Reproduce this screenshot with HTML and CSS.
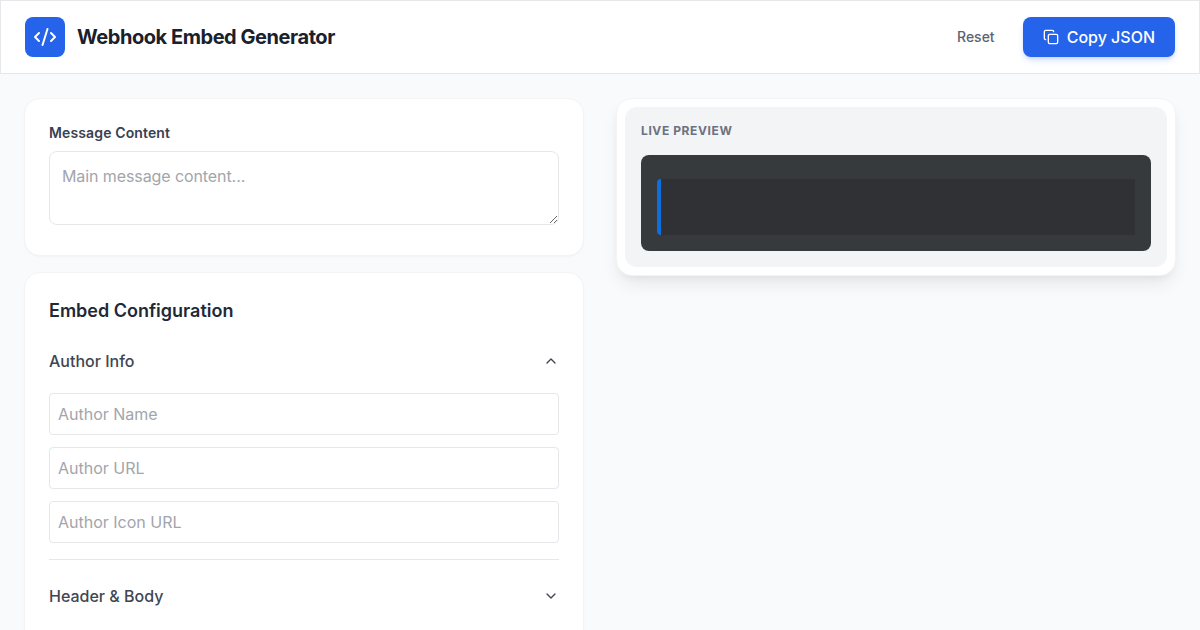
FILE: index.html
```html
<!DOCTYPE html>
<html lang="en">
<head>
<meta charset="utf-8">
<title>Webhook Embed Generator</title>
<link rel="stylesheet" href="styles.css">
</head>
<body>
<header class="topbar">
  <div class="brand">
    <span class="logo">
      <svg width="24" height="24" viewBox="0 0 24 24" fill="none" stroke="currentColor" stroke-width="2" stroke-linecap="round" stroke-linejoin="round"><path d="m18 16 4-4-4-4"/><path d="m6 8-4 4 4 4"/><path d="m14.5 4-5 16"/></svg>
    </span>
    <h1 class="title">Webhook Embed Generator</h1>
  </div>
  <div class="actions">
    <button class="btn-reset">Reset</button>
    <button class="btn-copy">
      <svg width="16" height="16" viewBox="0 0 24 24" fill="none" stroke="currentColor" stroke-width="2" stroke-linecap="round" stroke-linejoin="round"><rect x="8" y="8" width="14" height="14" rx="2"/><path d="M4 16c-1.1 0-2-.9-2-2V4c0-1.1.9-2 2-2h10c1.1 0 2 .9 2 2"/></svg>
      Copy JSON
    </button>
  </div>
</header>
<main class="layout">
  <div class="column">
    <section class="card">
      <label class="field-label" for="content">Message Content</label>
      <textarea id="content" class="textarea" placeholder="Main message content..."></textarea>
    </section>
    <section class="card">
      <h2 class="section-title">Embed Configuration</h2>
      <div class="accordion accordion-open">
        <div class="accordion-head">
          <span>Author Info</span>
          <svg width="16" height="16" viewBox="0 0 24 24" fill="none" stroke="currentColor" stroke-width="2" stroke-linecap="round" stroke-linejoin="round"><path d="m18 15-6-6-6 6"/></svg>
        </div>
        <div class="accordion-body">
          <input class="input" placeholder="Author Name">
          <input class="input" placeholder="Author URL">
          <input class="input" placeholder="Author Icon URL">
        </div>
      </div>
      <div class="accordion accordion-next">
        <div class="accordion-head">
          <span>Header &amp; Body</span>
          <svg width="16" height="16" viewBox="0 0 24 24" fill="none" stroke="currentColor" stroke-width="2" stroke-linecap="round" stroke-linejoin="round"><path d="m6 9 6 6 6-6"/></svg>
        </div>
      </div>
    </section>
  </div>
  <aside class="column">
    <section class="preview-card">
      <div class="preview-inner">
        <div class="preview-label">Live Preview</div>
        <div class="discord">
          <div class="embed"></div>
        </div>
      </div>
    </section>
  </aside>
</main>
</body>
</html>
```
FILE: styles.css
```css
* { box-sizing: border-box; }
html { height: 100%; overflow: hidden; }
body {
  margin: 0;
  background: #f9fafb;
  font-family: Inter, "Liberation Sans", sans-serif;
  color: #111827;
}
.topbar {
  display: flex;
  align-items: center;
  justify-content: space-between;
  padding: 16px 24px;
  background: #fff;
  border: 1px solid #e5e7eb;
}
.brand { display: flex; align-items: center; gap: 12px; }
.logo {
  width: 40px;
  height: 40px;
  display: flex;
  align-items: center;
  justify-content: center;
  background: #2563eb;
  border-radius: 8px;
  color: #fff;
}
.title { margin: 0; font-size: 20px; line-height: 28px; font-weight: 700; letter-spacing: -0.45px; color: #1a202c; }
.actions { display: flex; align-items: center; gap: 12px; }
.btn-reset {
  padding: 8px 16px;
  border: 0;
  background: transparent;
  font: 500 14px/20px Inter, sans-serif;
  color: #5b6370;
}
.btn-copy {
  display: flex;
  align-items: center;
  gap: 8px;
  height: 40px;
  padding: 0 20px;
  border: 0;
  border-radius: 8px;
  background: #2563eb;
  color: #fff;
  font: 500 16px/24px Inter, sans-serif;
  box-shadow: 0 4px 6px -1px rgba(37, 99, 235, .2), 0 2px 4px -2px rgba(37, 99, 235, .2);
}
.layout {
  display: grid;
  grid-template-columns: 1fr 1fr;
  gap: 32px;
  padding: 24px;
  align-items: start;
}
.column { display: flex; flex-direction: column; gap: 16px; min-width: 0; }
.card {
  background: #fff;
  border: 1px solid #f3f4f6;
  border-radius: 16px;
  padding: 24px;
  box-shadow: 0 1px 2px rgba(0, 0, 0, .03);
}
.field-label {
  display: block;
  margin-bottom: 8px;
  font-size: 14px;
  line-height: 20px;
  font-weight: 600;
  letter-spacing: .13px;
  color: #374151;
}
.textarea {
  display: block;
  width: 100%;
  height: 74px;
  margin-bottom: 6px;
  padding: 12px;
  border: 1px solid #e5e7eb;
  border-radius: 8px;
  background: #fff;
  font: 400 16px/24px Inter, sans-serif;
  letter-spacing: -.09px;
  color: #111827;
}
.textarea::placeholder, .input::placeholder { color: #a2a5ab; opacity: 1; }
.section-title { margin: 0 0 8px; font-size: 18px; line-height: 28px; font-weight: 600; color: #1f2937; }
.accordion-open { border-bottom: 1px solid #e5e7eb; }
.accordion-next { padding-top: 8px; }
.accordion-head {
  display: flex;
  align-items: center;
  justify-content: space-between;
  padding: 16px 0;
  font-size: 16px;
  line-height: 24px;
  font-weight: 500;
  color: #404651;
}
.accordion-body { display: flex; flex-direction: column; gap: 12px; padding: 4px 0 16px; }
.input {
  width: 100%;
  height: 42px;
  padding: 8px;
  border: 1px solid #e5e7eb;
  border-radius: 4px;
  background: #fff;
  font: 400 16px/24px Inter, sans-serif;
  color: #111827;
}
.preview-card {
  padding: 8px;
  background: #fff;
  border: 1px solid #f3f4f6;
  border-radius: 16px;
  box-shadow: 0 10px 18px -3px rgba(0, 0, 0, .08), 0 4px 8px -4px rgba(0, 0, 0, .07);
}
.preview-inner { padding: 16px; background: #f3f4f6; border-radius: 12px; }
.preview-label {
  margin-bottom: 16px;
  font-size: 12px;
  line-height: 16px;
  font-weight: 700;
  letter-spacing: .6px;
  text-transform: uppercase;
  color: #6b7280;
}
.discord { padding: 24px 16px 16px; background: #373a3d; border-radius: 8px; }
.embed { height: 56px; background: #2f3135; border-left: 4px solid #0b6fe0; border-radius: 4px 0 0 4px; }
```
